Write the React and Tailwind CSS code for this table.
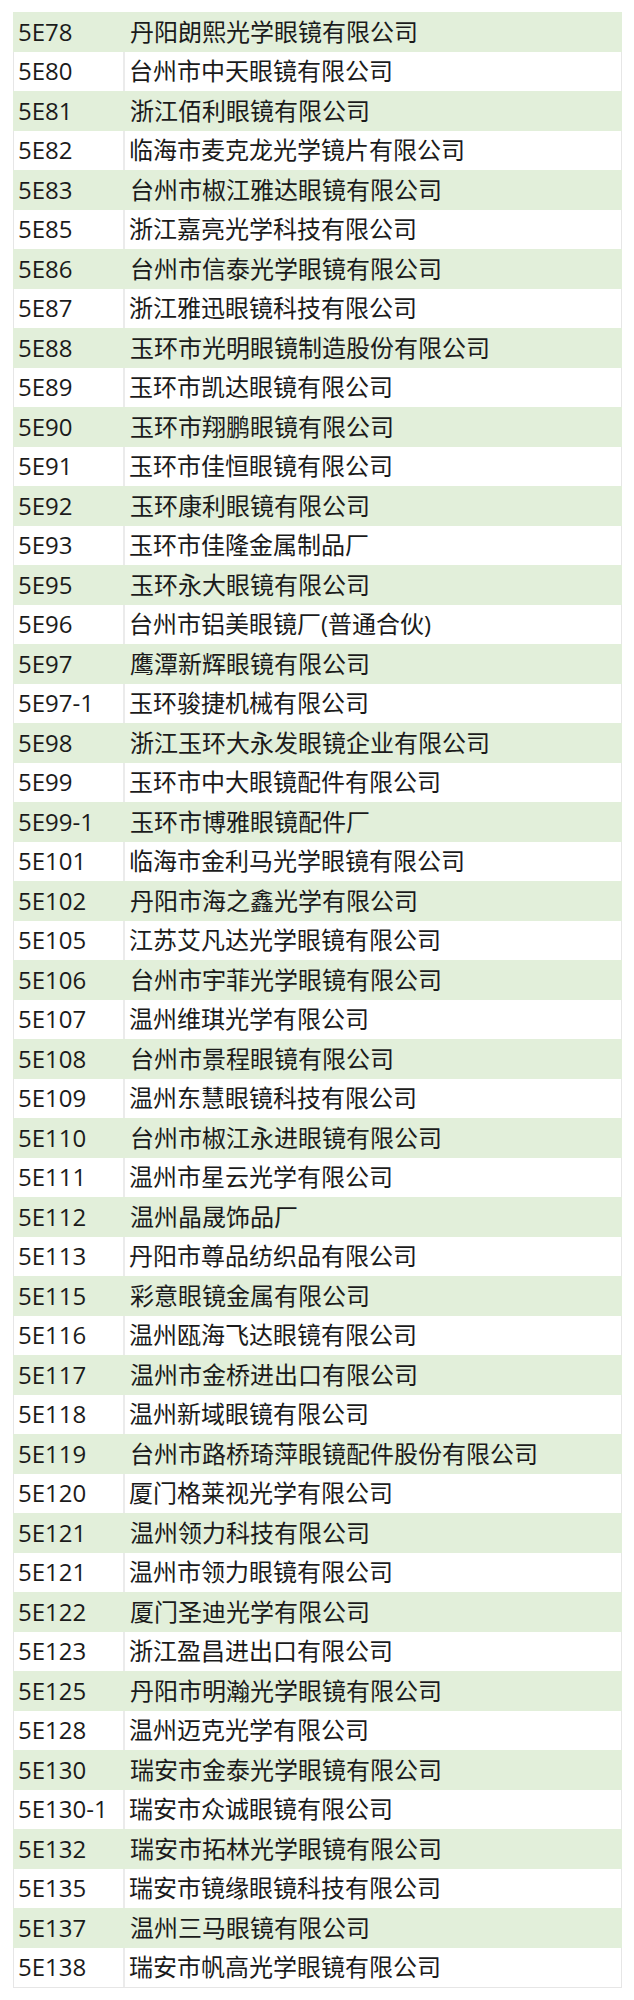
import React from 'react';

const rows = [
  ['5E78', '丹阳朗熙光学眼镜有限公司'],
  ['5E80', '台州市中天眼镜有限公司'],
  ['5E81', '浙江佰利眼镜有限公司'],
  ['5E82', '临海市麦克龙光学镜片有限公司'],
  ['5E83', '台州市椒江雅达眼镜有限公司'],
  ['5E85', '浙江嘉亮光学科技有限公司'],
  ['5E86', '台州市信泰光学眼镜有限公司'],
  ['5E87', '浙江雅迅眼镜科技有限公司'],
  ['5E88', '玉环市光明眼镜制造股份有限公司'],
  ['5E89', '玉环市凯达眼镜有限公司'],
  ['5E90', '玉环市翔鹏眼镜有限公司'],
  ['5E91', '玉环市佳恒眼镜有限公司'],
  ['5E92', '玉环康利眼镜有限公司'],
  ['5E93', '玉环市佳隆金属制品厂'],
  ['5E95', '玉环永大眼镜有限公司'],
  ['5E96', '台州市铝美眼镜厂(普通合伙)'],
  ['5E97', '鹰潭新辉眼镜有限公司'],
  ['5E97-1', '玉环骏捷机械有限公司'],
  ['5E98', '浙江玉环大永发眼镜企业有限公司'],
  ['5E99', '玉环市中大眼镜配件有限公司'],
  ['5E99-1', '玉环市博雅眼镜配件厂'],
  ['5E101', '临海市金利马光学眼镜有限公司'],
  ['5E102', '丹阳市海之鑫光学有限公司'],
  ['5E105', '江苏艾凡达光学眼镜有限公司'],
  ['5E106', '台州市宇菲光学眼镜有限公司'],
  ['5E107', '温州维琪光学有限公司'],
  ['5E108', '台州市景程眼镜有限公司'],
  ['5E109', '温州东慧眼镜科技有限公司'],
  ['5E110', '台州市椒江永进眼镜有限公司'],
  ['5E111', '温州市星云光学有限公司'],
  ['5E112', '温州晶晟饰品厂'],
  ['5E113', '丹阳市尊品纺织品有限公司'],
  ['5E115', '彩意眼镜金属有限公司'],
  ['5E116', '温州瓯海飞达眼镜有限公司'],
  ['5E117', '温州市金桥进出口有限公司'],
  ['5E118', '温州新域眼镜有限公司'],
  ['5E119', '台州市路桥琦萍眼镜配件股份有限公司'],
  ['5E120', '厦门格莱视光学有限公司'],
  ['5E121', '温州领力科技有限公司'],
  ['5E121', '温州市领力眼镜有限公司'],
  ['5E122', '厦门圣迪光学有限公司'],
  ['5E123', '浙江盈昌进出口有限公司'],
  ['5E125', '丹阳市明瀚光学眼镜有限公司'],
  ['5E128', '温州迈克光学有限公司'],
  ['5E130', '瑞安市金泰光学眼镜有限公司'],
  ['5E130-1', '瑞安市众诚眼镜有限公司'],
  ['5E132', '瑞安市拓林光学眼镜有限公司'],
  ['5E135', '瑞安市镜缘眼镜科技有限公司'],
  ['5E137', '温州三马眼镜有限公司'],
  ['5E138', '瑞安市帆高光学眼镜有限公司'],
];

const App = () => {
  return (
    <div
      className="bg-white pt-[12px] pb-[13px] pl-[13px] pr-[12px] text-[#1b1b1b]"
      style={{ fontFamily: '"Open Sans", "Noto Sans CJK SC", sans-serif' }}
    >
      <div className="flex flex-col border-b border-[#e6e6e6]">
        {rows.map(([code, name], i) =>
          i % 2 === 0 ? (
            <div key={i} className="flex h-[39.5px] items-center bg-[#e2efda] text-[24px] leading-none">
              <div className="w-[112px] pl-[5px]">{code}</div>
              <div className="flex-1 pl-[5px]">{name}</div>
            </div>
          ) : (
            <div
              key={i}
              className="flex h-[39.5px] items-stretch border-x border-[#e6e6e6] bg-white text-[24px] leading-none"
            >
              <div className="flex w-[111px] items-center border-r-2 border-[#ebebeb] pl-[4px]">{code}</div>
              <div className="flex flex-1 items-center pl-[4px]">{name}</div>
            </div>
          )
        )}
      </div>
    </div>
  );
};

export default App;
